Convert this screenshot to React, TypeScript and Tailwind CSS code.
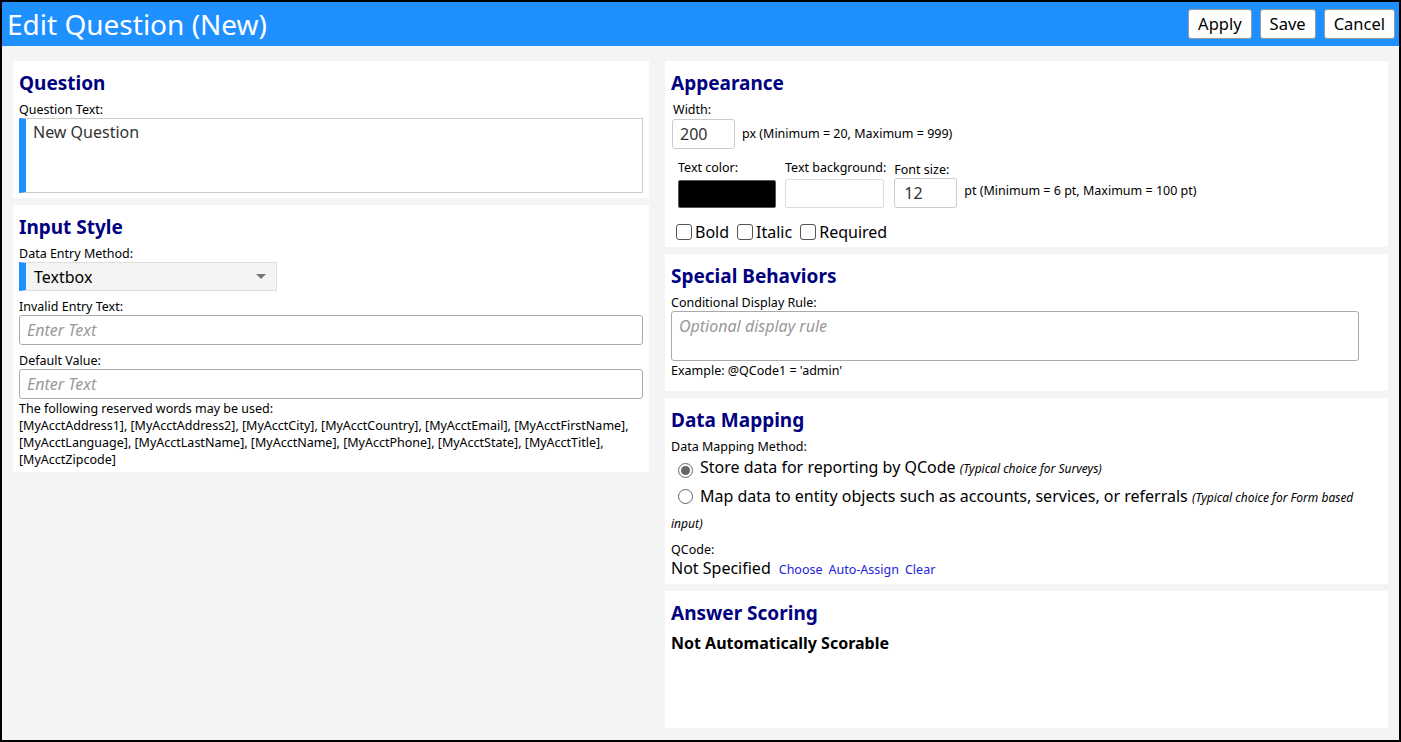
import React from 'react';

const font = { fontFamily: '"Noto Sans", "Open Sans", sans-serif' };

function Card({ title, className = '', children }: { title: string; className?: string; children?: React.ReactNode }) {
    return (
        <div className={`bg-white px-[6px] pt-[9px] ${className}`}>
            <h2 className="mb-[5px] text-[19px] font-bold leading-[26px] text-[#000080]">{title}</h2>
            {children}
        </div>
    );
}

function Label({ children, className = '' }: { children: React.ReactNode; className?: string }) {
    return <div className={`text-[12.5px] leading-[17px] text-black ${className}`}>{children}</div>;
}

function Checkbox({ label }: { label: string }) {
    return (
        <label className="flex items-center gap-[3px] text-[16px] text-black">
            <span className="h-[16px] w-[16px] rounded-[3px] border border-[#555] bg-white" />
            {label}
        </label>
    );
}

function Radio({ checked, children }: { checked?: boolean; children: React.ReactNode }) {
    return (
        <div className="flex items-baseline pl-[7px]">
            <span className="relative top-[2px] mr-[7px] flex h-[15px] w-[15px] shrink-0 items-center justify-center rounded-full border border-[#666] bg-white">
                {checked && <span className="h-[9px] w-[9px] rounded-full bg-[#666]" />}
            </span>
            <span className="text-[16px] text-black">{children}</span>
        </div>
    );
}

export default function App() {
    return (
        <div className="flex h-[742px] w-full flex-col border-2 border-black bg-[#f4f4f4]" style={font}>
            {/* Header */}
            <div className="flex h-[44px] shrink-0 items-center justify-between bg-[#1e90ff] pl-[5px] pr-[4px]">
                <h1 className="text-[28px] leading-none text-white">Edit Question (New)</h1>
                <div className="flex items-center gap-[8px]">
                    {['Apply', 'Save', 'Cancel'].map((b) => (
                        <button key={b} className="h-[30px] rounded-[3px] border border-[#999] bg-white px-[9px] text-[16.5px] leading-none text-black">
                            {b}
                        </button>
                    ))}
                </div>
            </div>

            {/* Body */}
            <div className="flex flex-1 gap-[16px] px-[11px] pt-[15px]">
                {/* Left column */}
                <div className="flex w-[636px] flex-col gap-[7px]">
                    <Card title="Question" className="h-[137px]">
                        <Label>Question Text:</Label>
                        <div className="flex h-[75px] border border-[#ccc] border-l-[7px] border-l-[#1e90ff]">
                            <div className="px-[7px] pt-[1px] text-[16px] text-[#333]">New Question</div>
                        </div>
                    </Card>

                    <Card title="Input Style" className="h-[267px]">
                        <Label>Data Entry Method:</Label>
                        <div className="flex h-[29px] w-[258px] items-center justify-between border border-[#ddd] border-l-[7px] border-l-[#1e90ff] bg-[#f4f4f4] pl-[8px] pr-[10px]">
                            <span className="text-[16px] text-black">Textbox</span>
                            <span className="h-0 w-0 border-x-[5px] border-t-[5px] border-x-transparent border-t-[#777]" />
                        </div>
                        <Label className="mt-[7px]">Invalid Entry Text:</Label>
                        <div className="flex h-[30px] items-center rounded-[3px] border border-[#aaa] px-[7px] text-[16px] italic text-[#999]">Enter Text</div>
                        <Label className="mt-[7px]">Default Value:</Label>
                        <div className="flex h-[30px] items-center rounded-[3px] border border-[#aaa] px-[7px] text-[16px] italic text-[#999]">Enter Text</div>
                        <div className="mt-[1px] text-[12.5px] leading-[17px] text-black">
                            The following reserved words may be used:
                            <br />
                            [MyAcctAddress1], [MyAcctAddress2], [MyAcctCity], [MyAcctCountry], [MyAcctEmail], [MyAcctFirstName], [MyAcctLanguage], [MyAcctLastName], [MyAcctName], [MyAcctPhone], [MyAcctState], [MyAcctTitle], [MyAcctZipcode]
                        </div>
                    </Card>
                </div>

                {/* Right column */}
                <div className="flex flex-1 flex-col gap-[7px]">
                    <Card title="Appearance" className="h-[186px]">
                        <Label className="ml-[2px] mt-[2px]">Width:</Label>
                        <div className="mt-[1px] flex items-center">
                            <div className="ml-[1px] flex h-[30px] w-[63px] items-center rounded-[3px] border border-[#ccc] px-[7px] text-[16px] text-[#333]">200</div>
                            <span className="ml-[7px] text-[12.5px] text-black">px (Minimum = 20, Maximum = 999)</span>
                        </div>
                        <div className="mt-[10px] flex items-end">
                            <div className="ml-[7px] flex flex-col">
                                <Label className="mb-[4px]">Text color:</Label>
                                <div className="h-[28px] w-[98px] rounded-[2px] border border-[#555] bg-black" />
                            </div>
                            <div className="ml-[9px] flex flex-col">
                                <Label className="mb-[3px]">Text background:</Label>
                                <div className="h-[29px] w-[99px] rounded-[2px] border border-[#ddd] bg-white" />
                            </div>
                            <div className="ml-[8px] flex flex-col">
                                <Label className="mb-[0px]">Font size:</Label>
                                <div className="flex h-[30px] w-[63px] items-center rounded-[3px] border border-[#ccc] px-[9px] text-[16px] text-[#333]">12</div>
                            </div>
                            <span className="mb-[7px] ml-[7px] text-[12.5px] text-black">pt (Minimum = 6 pt, Maximum = 100 pt)</span>
                        </div>
                        <div className="ml-[5px] mt-[12px] flex items-center gap-[8px]">
                            <Checkbox label="Bold" />
                            <Checkbox label="Italic" />
                            <Checkbox label="Required" />
                        </div>
                    </Card>

                    <Card title="Special Behaviors" className="h-[137px]">
                        <Label>Conditional Display Rule:</Label>
                        <div className="h-[50px] w-[688px] rounded-[3px] border border-[#aaa] px-[7px] pt-[2px] text-[16px] italic text-[#999]">Optional display rule</div>
                        <Label className="mt-[1px]">Example: @QCode1 = 'admin'</Label>
                    </Card>

                    <Card title="Data Mapping" className="h-[186px]">
                        <Label className="mt-[1px]">Data Mapping Method:</Label>
                        <div className="-mt-[1px] leading-[26px]">
                            <Radio checked>
                                Store data for reporting by QCode <span className="text-[12px] italic">(Typical choice for Surveys)</span>
                            </Radio>
                        </div>
                        <div className="mt-[1px] leading-[26px]">
                            <div className="pl-[7px] text-[16px] text-black">
                                <span className="relative top-[2px] mr-[7px] inline-block h-[15px] w-[15px] rounded-full border border-[#666] bg-white" />
                                Map data to entity objects such as accounts, services, or referrals <span className="text-[12px] italic">(Typical choice for Form based</span>
                            </div>
                            <div className="text-[12px] italic text-black">input)</div>
                        </div>
                        <Label className="mt-[4px]">QCode:</Label>
                        <div className="-mt-[2px] flex items-baseline gap-[6px]">
                            <span className="text-[16px] text-black">Not Specified</span>
                            <span className="ml-[2px] text-[12.5px] text-[#2222dd]">Choose</span>
                            <span className="text-[12.5px] text-[#2222dd]">Auto-Assign</span>
                            <span className="text-[12.5px] text-[#2222dd]">Clear</span>
                        </div>
                    </Card>

                    <Card title="Answer Scoring" className="h-[137px]">
                        <div className="text-[16px] font-bold text-black">Not Automatically Scorable</div>
                    </Card>
                </div>
            </div>
        </div>
    );
}
